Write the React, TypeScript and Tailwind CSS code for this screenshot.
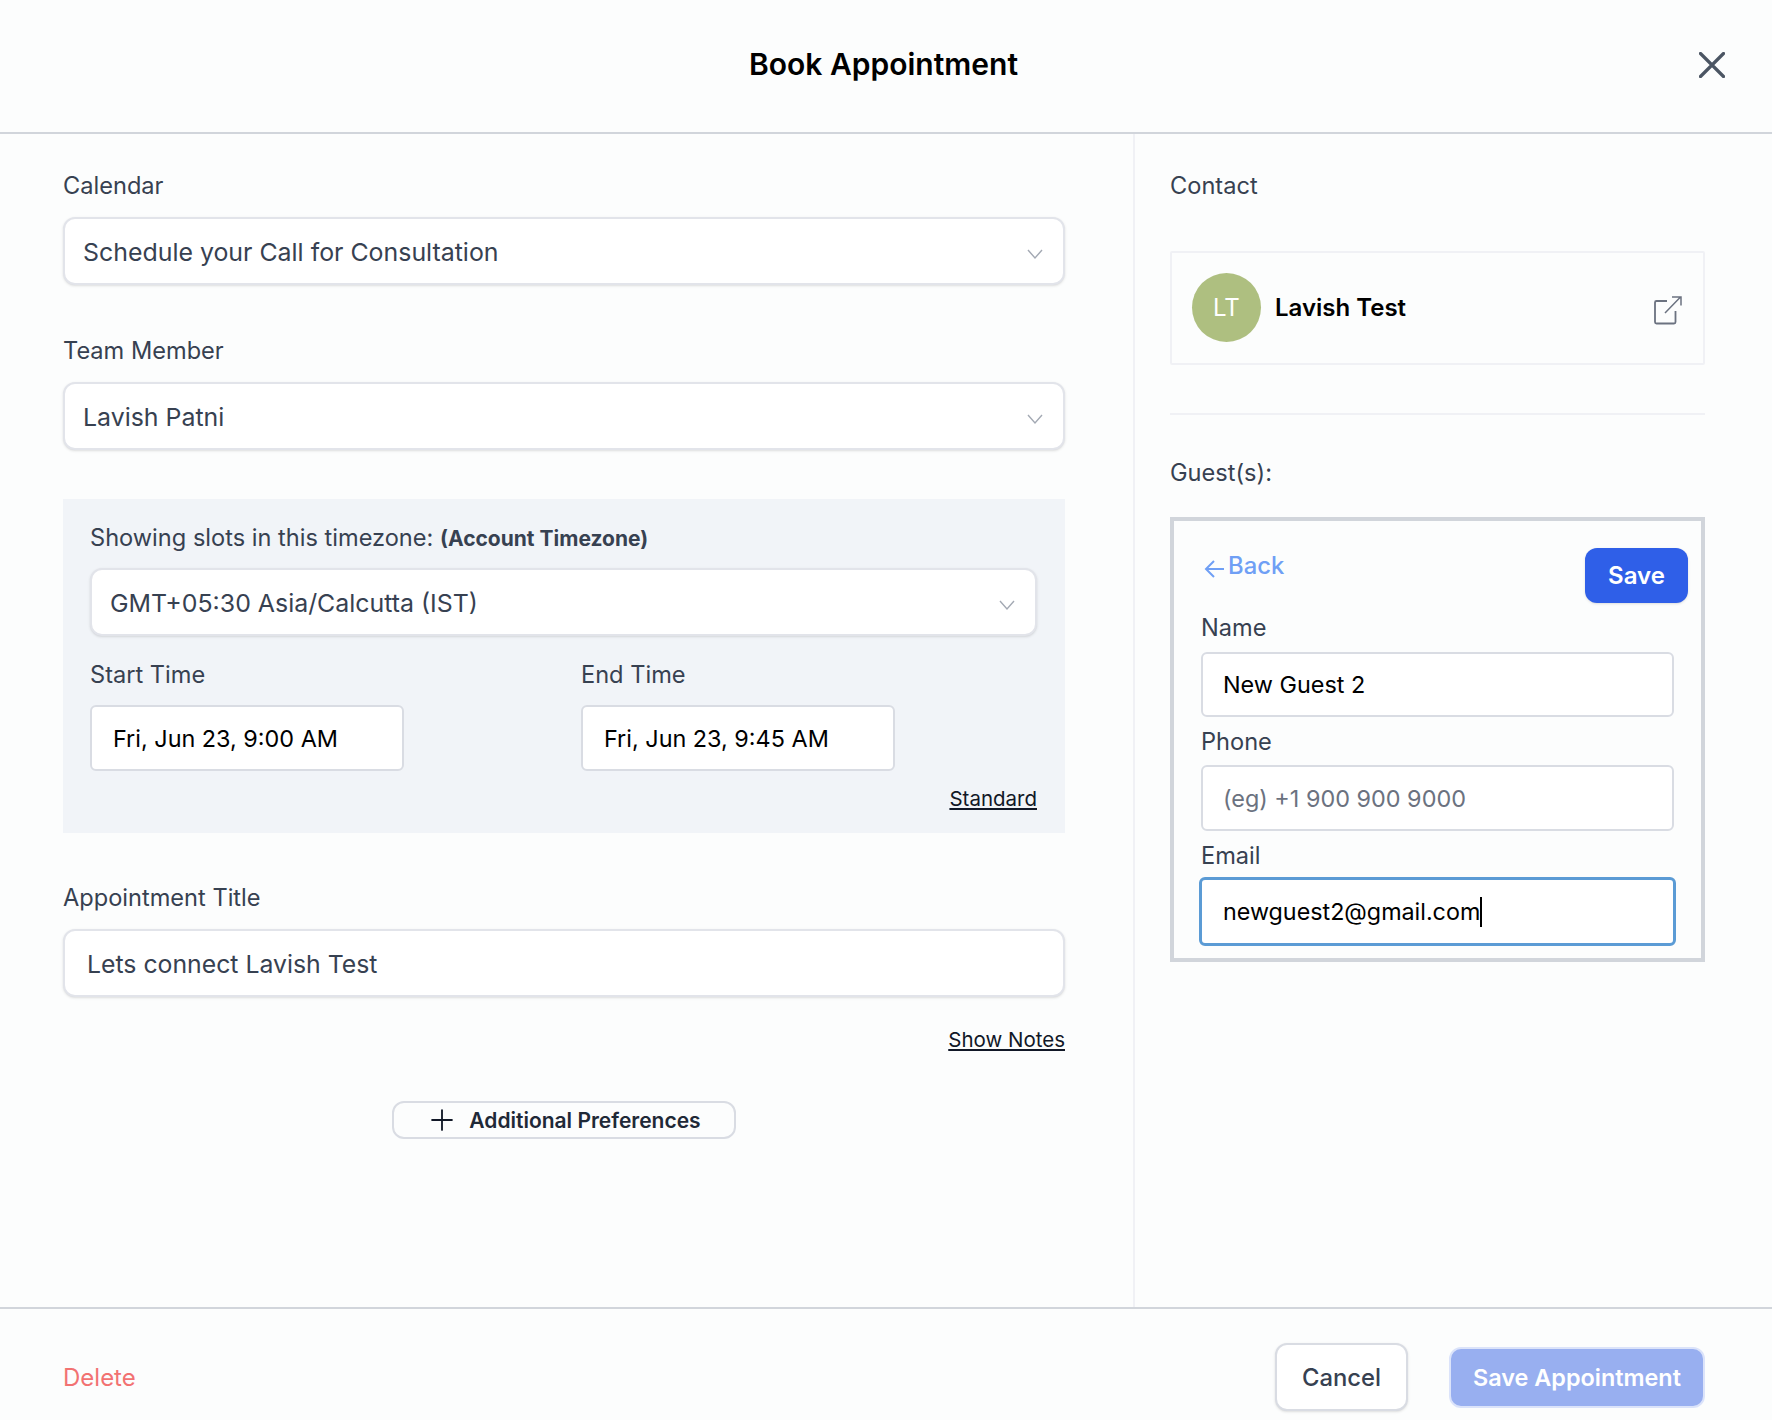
import React from 'react';
import { Plus } from 'lucide-react';

const Chevron = () => (
  <svg width="18" height="12" viewBox="0 0 18 12" fill="none" className="mt-[6px] shrink-0">
    <path d="M2 2l7 8 7-8" stroke="#a3a9b3" strokeWidth="1.4" />
  </svg>
);

const Label = ({ children, className = '' }: { children: React.ReactNode; className?: string }) => (
  <div className={`h-[36px] leading-[36px] text-[23.6px] text-[#374151] ${className}`}>{children}</div>
);

const Select = ({ value }: { value: string }) => (
  <div className="flex h-[68px] items-center justify-between rounded-[12px] border-2 border-[#e2e4ea] bg-white pl-[18px] pr-[19px] text-[24.9px] text-[#374151] shadow-sm">
    <span className="pt-[3px]">{value}</span>
    <Chevron />
  </div>
);

const TimeField = ({ label, value }: { label: string; value: string }) => (
  <div className="w-[314px]">
    <Label className="mb-[12px]">{label}</Label>
    <input
      readOnly
      value={value}
      className="h-[66px] w-full rounded-[6px] border-2 border-[#d9dce3] bg-white pl-[21px] text-[23.4px] text-black outline-none"
    />
  </div>
);

export default function App() {
  return (
    <div className="flex h-[1420px] flex-col overflow-hidden bg-[#fcfdfd] font-['Inter',sans-serif]">
      <header className="flex h-[134px] shrink-0 items-center justify-between border-b-2 border-[#d1d5db] pb-[3px] pl-[48px] pr-[47px]">
        <div className="w-[20px]" />
        <h1 className="text-[30px] font-semibold text-black">Book Appointment</h1>
        <svg width="26" height="26" viewBox="0 0 26 26" fill="none">
          <path d="M1.5 1.5l23 23M24.5 1.5l-23 23" stroke="#4b5563" strokeWidth="3.2" strokeLinecap="round" />
        </svg>
      </header>

      <div className="flex min-h-0 flex-1">
        <section className="w-[1135px] shrink-0 border-r-2 border-[#f0f1f5] pl-[63px] pr-[68px] pt-[34px]">
          <Label className="mb-[13px]">Calendar</Label>
          <Select value="Schedule your Call for Consultation" />

          <Label className="mb-[13px] mt-[48px]">Team Member</Label>
          <Select value="Lavish Patni" />

          <div className="mt-[49px] h-[334px] bg-[#f1f4f8] pl-[27px] pr-[28px] pt-[21px]">
            <Label className="mb-[12px]">
              Showing slots in this timezone: <span className="text-[21px] font-bold">(Account Timezone)</span>
            </Label>
            <Select value="GMT+05:30 Asia/Calcutta (IST)" />
            <div className="mt-[21px] flex gap-[177px]">
              <TimeField label="Start Time" value="Fri, Jun 23, 9:00 AM" />
              <TimeField label="End Time" value="Fri, Jun 23, 9:45 AM" />
            </div>
            <div className="mt-[13px] text-right text-[20.5px] leading-[30px] text-[#111827] underline">Standard</div>
          </div>

          <Label className="mb-[13px] mt-[47px]">Appointment Title</Label>
          <input
            readOnly
            value="Lets connect Lavish Test"
            className="h-[68px] w-full rounded-[12px] border-2 border-[#e2e4ea] bg-white pl-[22px] pt-[1px] text-[24.8px] text-[#374151] shadow-sm outline-none"
          />
          <div className="mt-[28px] text-right text-[20.5px] leading-[30px] text-[#111827] underline">Show Notes</div>

          <div className="mt-[46px] flex justify-center">
            <button className="flex h-[38px] w-[344px] items-center justify-center gap-[10px] rounded-[12px] border-2 border-[#d9dce3] pr-[2px] text-[21px] font-semibold text-[#1f2937]">
              <Plus size={34} strokeWidth={1.3} className="text-[#111827]" />
              <span className="pt-[1px]">Additional Preferences</span>
            </button>
          </div>
        </section>

        <aside className="flex-1 pl-[35px] pr-[67px] pt-[34px]">
          <Label>Contact</Label>
          <div className="mt-[47px] flex h-[114px] items-center rounded-[2px] border-2 border-[#f0f1f5] px-[20px] pb-[1px]">
            <div className="flex size-[69px] items-center justify-center rounded-full bg-[#aebf80] text-[24px] text-white">LT</div>
            <span className="ml-[14px] flex-1 text-[24px] font-semibold text-black">Lavish Test</span>
            <svg width="30" height="30" viewBox="0 0 30 30" fill="none" className="mt-[5px]">
              <path d="M14 6H3.5A1.5 1.5 0 002 7.5V27a1.5 1.5 0 001.5 1.5H21a1.5 1.5 0 001.5-1.5V16" stroke="#6b7280" strokeWidth="1.8" />
              <path d="M12 18L27.5 2M19 2h9v8.5" stroke="#6b7280" strokeWidth="1.5" />
            </svg>
          </div>
          <div className="mt-[48px] h-[2px] bg-[#f0f1f5]" />
          <Label className="mt-[40px]">Guest(s):</Label>

          <div className="mt-[26px] h-[445px] border-4 border-[#d1d5db] px-[27px] pt-[27px]">
            <div className="-mr-[14px] flex h-[55px] items-start justify-between">
              <div className="flex h-[36px] items-center pl-[3px] text-[23.8px] font-medium text-[#6f9ff5]">
                <svg width="21" height="20" viewBox="0 0 21 20" fill="none" className="mr-[3px] mt-[5px]">
                  <path d="M20 10H2M10 2l-8 8 8 8" stroke="#6f9ff5" strokeWidth="2" />
                </svg>
                Back
              </div>
              <button className="h-[55px] w-[103px] rounded-[12px] bg-[#2f5fe8] pt-[1px] text-[24px] font-semibold text-white shadow-sm">Save</button>
            </div>

            <Label className="mb-[6px] mt-[7px]">Name</Label>
            <input
              readOnly
              value="New Guest 2"
              className="h-[65px] w-full rounded-[6px] border-2 border-[#d9dce3] bg-white pl-[20px] text-[23.4px] text-black outline-none"
            />
            <Label className="mb-[5px] mt-[7px]">Phone</Label>
            <input
              readOnly
              placeholder="(eg) +1 900 900 9000"
              className="h-[66px] w-full rounded-[6px] border-2 border-[#d9dce3] bg-white pl-[20px] text-[23.4px] outline-none placeholder:text-[#6b7280]"
            />
            <Label className="mb-[3px] mt-[7px]">Email</Label>
            <div className="-mx-[2px] flex h-[69px] items-center rounded-[6px] border-[3px] border-[#5b9bd5] bg-white pl-[21px] pt-[1px] text-[23.3px] text-black">
              newguest2@gmail.com
              <span className="h-[30px] w-[2px] bg-black" />
            </div>
          </div>
        </aside>
      </div>

      <footer className="flex h-[113px] shrink-0 items-center justify-between border-t-2 border-[#d1d5db] pl-[63px] pr-[67px] pt-[25px]">
        <span className="pt-[2px] text-[24px] text-[#f27272]">Delete</span>
        <div className="flex items-center gap-[41px]">
          <button className="h-[68px] w-[133px] rounded-[12px] border-2 border-[#d9dce3] bg-white pt-[2px] text-[23.8px] font-medium text-[#374151] shadow-sm">Cancel</button>
          <button className="h-[61px] w-[256px] rounded-[12px] border-2 border-[#dbe3fa] bg-[#98aff0] pt-[1px] text-[23.4px] font-semibold text-white">Save Appointment</button>
        </div>
      </footer>
    </div>
  );
}
